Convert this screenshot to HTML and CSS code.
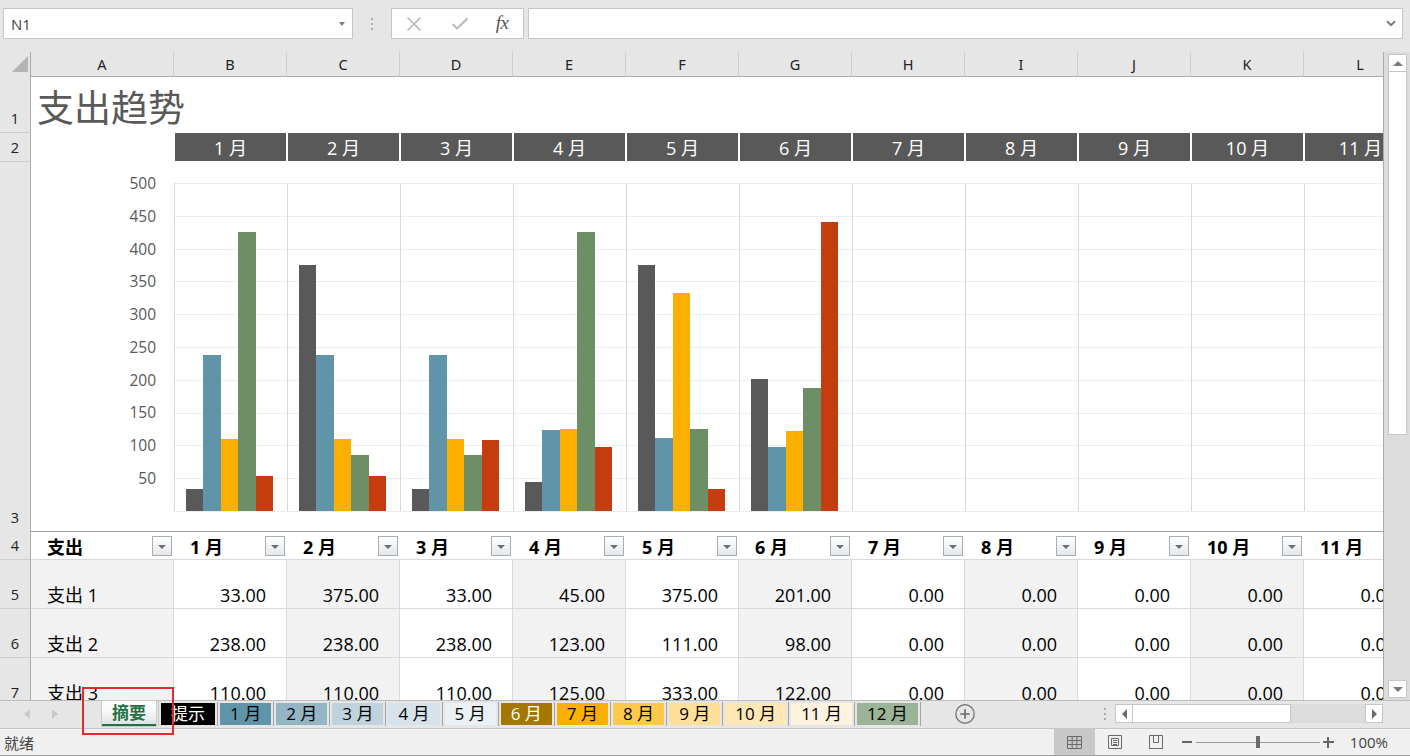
FILE: index.html
```html
<!DOCTYPE html>
<html lang="zh-CN">
<head>
<meta charset="utf-8">
<title>支出趋势</title>
<link rel="stylesheet" href="styles.css">
</head>
<body>
<div class="app">
  <div class="fbar">
    <div class="namebox"><span>N1</span><span class="dd"></span></div>
    <div class="fdots"><i></i><i></i><i></i></div>
    <div class="fbtns">
      <span class="fb fb-x"><svg width="16" height="16" viewBox="0 0 16 16"><path d="M1.5 1.5L14.5 14.5M14.5 1.5L1.5 14.5" stroke="#b5b5b5" stroke-width="1.5" fill="none"/></svg></span>
      <span class="fb fb-ok"><svg width="18" height="14" viewBox="0 0 18 14"><path d="M1.5 7L6 11.5L16.5 1.5" stroke="#b5b5b5" stroke-width="1.8" fill="none"/></svg></span>
      <span class="fb fb-fx">fx</span>
    </div>
    <div class="finput"><svg width="10" height="7" viewBox="0 0 10 7"><path d="M1 1.2L5 5.2L9 1.2" stroke="#7a7a7a" stroke-width="2" fill="none"/></svg></div>
  </div>

  <div class="sheet">
    <div class="grid">
      <div class="hdr">
        <div class="corner"><svg width="31" height="24" viewBox="0 0 31 24"><polygon points="28,4 28,20 12,20" fill="#b4b4b4"/></svg></div>
        <div class="ch">A</div><div class="ch">B</div><div class="ch">C</div><div class="ch">D</div><div class="ch">E</div><div class="ch">F</div><div class="ch">G</div><div class="ch">H</div><div class="ch">I</div><div class="ch">J</div><div class="ch">K</div><div class="ch">L</div>
      </div>

      <div class="row r1">
        <div class="rh">1</div>
        <div class="title">支出趋势</div>
      </div>

      <div class="row r2">
        <div class="rh">2</div>
        <div class="blank"></div>
        <div class="mcell"><div class="mbox">1 月</div></div>
        <div class="mcell"><div class="mbox">2 月</div></div>
        <div class="mcell"><div class="mbox">3 月</div></div>
        <div class="mcell"><div class="mbox">4 月</div></div>
        <div class="mcell"><div class="mbox">5 月</div></div>
        <div class="mcell"><div class="mbox">6 月</div></div>
        <div class="mcell"><div class="mbox">7 月</div></div>
        <div class="mcell"><div class="mbox">8 月</div></div>
        <div class="mcell"><div class="mbox">9 月</div></div>
        <div class="mcell"><div class="mbox">10 月</div></div>
        <div class="mcell"><div class="mbox">11 月</div></div>
      </div>

      <div class="row r3">
        <div class="rh">3</div>
        <div class="axis">
          <div class="ylabels">
            <span>500</span><span>450</span><span>400</span><span>350</span><span>300</span><span>250</span><span>200</span><span>150</span><span>100</span><span>50</span>
          </div>
        </div>
        <div class="plot">
          <div class="parea">
            <div class="pcol"><i class="bar s1" style="height:21.6px"></i><i class="bar s2" style="height:156.1px"></i><i class="bar s3" style="height:72.2px"></i><i class="bar s4" style="height:278.8px"></i><i class="bar s5" style="height:35.4px"></i></div>
            <div class="pcol"><i class="bar s1" style="height:246px"></i><i class="bar s2" style="height:156.1px"></i><i class="bar s3" style="height:72.2px"></i><i class="bar s4" style="height:55.8px"></i><i class="bar s5" style="height:35.4px"></i></div>
            <div class="pcol"><i class="bar s1" style="height:21.6px"></i><i class="bar s2" style="height:156.1px"></i><i class="bar s3" style="height:72.2px"></i><i class="bar s4" style="height:55.8px"></i><i class="bar s5" style="height:70.8px"></i></div>
            <div class="pcol"><i class="bar s1" style="height:29.5px"></i><i class="bar s2" style="height:80.7px"></i><i class="bar s3" style="height:82px"></i><i class="bar s4" style="height:278.8px"></i><i class="bar s5" style="height:64.3px"></i></div>
            <div class="pcol"><i class="bar s1" style="height:246px"></i><i class="bar s2" style="height:72.8px"></i><i class="bar s3" style="height:218.4px"></i><i class="bar s4" style="height:82px"></i><i class="bar s5" style="height:21.6px"></i></div>
            <div class="pcol"><i class="bar s1" style="height:131.9px"></i><i class="bar s2" style="height:64.3px"></i><i class="bar s3" style="height:80px"></i><i class="bar s4" style="height:122.7px"></i><i class="bar s5" style="height:289.3px"></i></div>
            <div class="pcol"></div>
            <div class="pcol"></div>
            <div class="pcol"></div>
            <div class="pcol"></div>
            <div class="pcol"></div>
          </div>
        </div>
      </div>

      <div class="row r4">
        <div class="rh">4</div>
        <div class="th"><span>支出</span><span class="flt"></span></div>
        <div class="th"><span>1 月</span><span class="flt"></span></div>
        <div class="th"><span>2 月</span><span class="flt"></span></div>
        <div class="th"><span>3 月</span><span class="flt"></span></div>
        <div class="th"><span>4 月</span><span class="flt"></span></div>
        <div class="th"><span>5 月</span><span class="flt"></span></div>
        <div class="th"><span>6 月</span><span class="flt"></span></div>
        <div class="th"><span>7 月</span><span class="flt"></span></div>
        <div class="th"><span>8 月</span><span class="flt"></span></div>
        <div class="th"><span>9 月</span><span class="flt"></span></div>
        <div class="th"><span>10 月</span><span class="flt"></span></div>
        <div class="th"><span>11 月</span><span class="flt"></span></div>
      </div>

      <div class="row trow">
        <div class="rh">5</div>
        <div class="c lbl">支出 1</div>
        <div class="c">33.00</div><div class="c">375.00</div><div class="c">33.00</div><div class="c">45.00</div><div class="c">375.00</div><div class="c">201.00</div><div class="c">0.00</div><div class="c">0.00</div><div class="c">0.00</div><div class="c">0.00</div><div class="c">0.00</div>
      </div>
      <div class="row trow">
        <div class="rh">6</div>
        <div class="c lbl">支出 2</div>
        <div class="c">238.00</div><div class="c">238.00</div><div class="c">238.00</div><div class="c">123.00</div><div class="c">111.00</div><div class="c">98.00</div><div class="c">0.00</div><div class="c">0.00</div><div class="c">0.00</div><div class="c">0.00</div><div class="c">0.00</div>
      </div>
      <div class="row trow">
        <div class="rh">7</div>
        <div class="c lbl">支出 3</div>
        <div class="c">110.00</div><div class="c">110.00</div><div class="c">110.00</div><div class="c">125.00</div><div class="c">333.00</div><div class="c">122.00</div><div class="c">0.00</div><div class="c">0.00</div><div class="c">0.00</div><div class="c">0.00</div><div class="c">0.00</div>
      </div>
    </div>

    <div class="vscroll">
      <div class="sbtn"><span class="tri-up"></span></div>
      <div class="vthumb"></div>
      <div class="sbtn down"><span class="tri-down"></span></div>
    </div>
  </div>

  <div class="tabbar">
    <div class="tnav"><span class="tl"></span><span class="tr"></span></div>
    <div class="tabs">
      <div class="tab active"><span>摘要</span></div>
      <div class="tab"><span class="c-tip">提示</span></div>
      <div class="tab"><span class="c-1">1 月</span></div>
      <div class="tab"><span class="c-2">2 月</span></div>
      <div class="tab"><span class="c-3">3 月</span></div>
      <div class="tab"><span class="c-4">4 月</span></div>
      <div class="tab"><span class="c-5">5 月</span></div>
      <div class="tab"><span class="c-6">6 月</span></div>
      <div class="tab"><span class="c-7">7 月</span></div>
      <div class="tab"><span class="c-8">8 月</span></div>
      <div class="tab"><span class="c-9">9 月</span></div>
      <div class="tab"><span class="c-10">10 月</span></div>
      <div class="tab"><span class="c-11">11 月</span></div>
      <div class="tab"><span class="c-12">12 月</span></div>
    </div>
    <div class="tadd"><svg width="22" height="22" viewBox="0 0 22 22"><circle cx="11" cy="11" r="9.2" fill="none" stroke="#7a7a7a" stroke-width="1.4"/><path d="M11 6.2V15.8M6.2 11H15.8" stroke="#6a6a6a" stroke-width="1.6"/></svg></div>
    <div class="hsdots"><i></i><i></i><i></i></div>
    <div class="hscroll">
      <span class="hbtn"><span class="tri-left"></span></span>
      <span class="hthumb"></span>
      <span class="htrack"></span>
      <span class="hbtn"><span class="tri-right"></span></span>
    </div>
    <div class="redbox"></div>
  </div>

  <div class="status">
    <span class="ready">就绪</span>
    <div class="sright">
      <span class="vbtn on"><svg width="15" height="13" viewBox="0 0 15 13"><path d="M0.5 0.5H14.5V12.5H0.5Z M5.17 0.5V12.5 M9.83 0.5V12.5 M0.5 4.5H14.5 M0.5 8.5H14.5" fill="none" stroke="#6a6a6a" stroke-width="1"/></svg></span>
      <span class="vbtn"><svg width="14" height="14" viewBox="0 0 14 14"><path d="M0.5 0.5H13.5V13.5H0.5Z M3.5 3.5H10.5V10.5H3.5Z M5 5.5H9 M5 7.5H9 M5 9.5H9" fill="none" stroke="#6a6a6a" stroke-width="1"/></svg></span>
      <span class="vbtn"><svg width="14" height="14" viewBox="0 0 14 14"><path d="M0.5 0.5H13.5V13.5H0.5Z M4.5 0.5V7.5H9.5V0.5" fill="none" stroke="#6a6a6a" stroke-width="1"/></svg></span>
      <span class="zminus"></span>
      <span class="zslider"><span class="zthumb"></span></span>
      <span class="zplus"></span>
      <span class="zpct">100%</span>
    </div>
  </div>
</div>
</body>
</html>
```

FILE: styles.css
```css
* { box-sizing: border-box; margin: 0; padding: 0; }
html, body { width: 1410px; height: 756px; overflow: hidden; }
body {
  background: #e6e6e6;
  font-family: "Open Sans", "Noto Sans CJK SC", sans-serif;
  color: #000;
}
.app { display: flex; flex-direction: column; height: 756px; width: 1410px; }

/* formula bar */
.fbar { height: 52px; flex: none; display: flex; align-items: flex-start; padding: 8px 7px 0 3px; }
.namebox {
  width: 350px; height: 31px; background: #fff; border: 1px solid #c6c6c6;
  display: flex; align-items: center; justify-content: space-between;
  padding: 0 7px 0 7px; font-size: 15px; color: #444;
}
.namebox .dd { width: 0; height: 0; border-left: 3.5px solid transparent; border-right: 3.5px solid transparent; border-top: 4px solid #7d7d7d; }
.fdots { width: 38px; height: 31px; display: flex; flex-direction: column; align-items: center; justify-content: center; gap: 3px; }
.fdots i, .hsdots i { display: block; width: 2px; height: 2px; background: #ababab; }
.fbtns {
  width: 133px; height: 31px; background: #fff; border: 1px solid #c6c6c6;
  display: flex; align-items: center;
}
.fb { display: flex; align-items: center; justify-content: center; height: 100%; }
.fb-x { width: 44px; }
.fb-ok { width: 48px; }
.fb-fx { width: 36px; font-family: "Liberation Serif", serif; font-style: italic; font-size: 19px; color: #555; letter-spacing: -0.5px; padding-bottom: 2px; }
.finput {
  flex: 1; height: 31px; margin-left: 4px; background: #fff; border: 1px solid #c6c6c6;
  display: flex; align-items: center; justify-content: flex-end; padding-right: 6px;
}

/* sheet */
.sheet { height: 648px; flex: none; display: flex; }
.grid { width: 1383px; height: 648px; overflow: hidden; background: #fff; }
.hdr, .row { display: grid; grid-template-columns: 31px 143px repeat(11, 113px); width: 1417px; }
.hdr { height: 24px; background: #e6e6e6; }
.corner { border-right: 1px solid #ababab; border-bottom: 1px solid #ababab; }
.corner svg { display: block; }
.ch {
  border-right: 1px solid #cdcdcd; border-bottom: 1px solid #ababab;
  display: flex; align-items: center; justify-content: center;
  font-family: "Noto Sans", sans-serif; font-size: 14.5px; color: #222;
}
.rh {
  background: #e6e6e6; border-right: 1px solid #ababab; border-bottom: 1px solid #cdcdcd;
  display: flex; align-items: flex-end; justify-content: center;
  font-size: 14.5px; color: #222; line-height: 20px; padding-bottom: 3px;
}
.r1 { height: 57px; }
.title {
  grid-column: 2 / -1; display: flex; align-items: flex-end;
  font-size: 37px; line-height: 44px; color: #595959; padding: 0 0 3px 6px;
}
.r2 { height: 29px; }
.mcell { padding: 0 1px 1px 1px; }
.mbox {
  height: 100%; background: #595959; color: #fff; font-size: 18px;
  display: flex; align-items: center; justify-content: center;
}
.r3 { height: 369px; }
.axis { padding-top: 13px; }
.ylabels {
  height: 311px; display: flex; flex-direction: column; justify-content: space-between;
  align-items: flex-end; padding-right: 18px;
}
.ylabels span { font-size: 15.5px; line-height: 16px; color: #595959; }
.plot { grid-column: 3 / -1; padding: 21px 0 20px 0; }
.parea {
  height: 329px; display: flex; border-bottom: 1px solid #ececec;
  background: repeating-linear-gradient(to bottom, #eeeeee 0, #eeeeee 1px, transparent 1px, transparent 32.8px);
}
.pcol {
  flex: 0 0 113px; border-left: 1px solid #d9d9d9; padding-left: 11px;
  display: flex; align-items: flex-end;
}
.bar { display: block; width: 17.4px; flex: none; }
.s1 { background: #595959; }
.s2 { background: #6094a8; }
.s3 { background: #fbb000; }
.s4 { background: #6e8e65; }
.s5 { background: #c53c0f; }

.r4 { height: 29px; }
.th {
  border-top: 1px solid #9e9e9e; border-bottom: 1px solid #d9d9d9;
  display: flex; align-items: center; justify-content: space-between;
  padding: 1px 2px 0 16px; font-weight: 700; font-size: 18px;
}
.flt {
  width: 20px; height: 20px; flex: none; position: relative;
  border: 1px solid #a9aeb5; background: linear-gradient(#ffffff, #e4e7ea);
}
.flt::after {
  content: ""; position: absolute; left: 5px; top: 8px;
  border-left: 4px solid transparent; border-right: 4px solid transparent; border-top: 4px solid #6e6e6e;
}
.trow { height: 49px; }
.c {
  border-right: 1px solid #d9d9d9; border-bottom: 1px solid #d9d9d9;
  display: flex; align-items: flex-end; justify-content: flex-end;
  padding: 0 20px 1px 0; font-size: 18px; line-height: 24px; background: #fff;
}
.trow .c:nth-child(even) { background: #f2f2f2; }
.c.lbl { justify-content: flex-start; padding-left: 16px; }

/* vertical scrollbar */
.vscroll {
  width: 27px; flex: none; background: #dcdcdc; border-left: 1px solid #ababab;
  display: flex; flex-direction: column; align-items: center; padding: 2px 0 2px 1px;
}
.sbtn {
  width: 19px; height: 18px; flex: none; background: #fff; border: 1px solid #c6c6c6;
  display: flex; align-items: center; justify-content: center;
}
.sbtn.down { margin-top: auto; }
.vthumb { width: 19px; height: 363px; flex: none; background: #fff; border: 1px solid #c6c6c6; border-top: none; }
.tri-up { border-left: 5px solid transparent; border-right: 5px solid transparent; border-bottom: 5px solid #7a7a7a; }
.tri-down { border-left: 5px solid transparent; border-right: 5px solid transparent; border-top: 5px solid #7a7a7a; }
.tri-left { border-top: 5px solid transparent; border-bottom: 5px solid transparent; border-right: 5px solid #6a6a6a; }
.tri-right { border-top: 5px solid transparent; border-bottom: 5px solid transparent; border-left: 5px solid #6a6a6a; }

/* tabs */
.tabbar {
  height: 28px; flex: none; position: relative; display: flex; align-items: flex-start;
  background: #e6e6e6; border-top: 1px solid #bdbdbd;
}
.tnav { width: 100px; height: 26px; display: flex; align-items: center; padding-left: 24px; gap: 22px; }
.tl { border-top: 5px solid transparent; border-bottom: 5px solid transparent; border-right: 6px solid #c9c9c9; }
.tr { border-top: 5px solid transparent; border-bottom: 5px solid transparent; border-left: 6px solid #c9c9c9; }
.tabs { display: flex; align-items: flex-start; }
.tab { padding: 0 2px; border-right: 1px solid #a3a3a3; height: 24px; margin-top: 1px; }
.tab span {
  display: block; height: 22px; margin-top: 1px; padding: 0 10px;
  font-size: 17px; line-height: 22px; white-space: nowrap;
}
.tab.active { border-right-color: #c6c6c6; margin-top: 0; height: 25px; }
.tab.active span {
  height: 25px; margin-top: 0; color: #217346; font-weight: 700;
  background: linear-gradient(#ffffff 0%, #f4f5f5 55%, #dfe3e4 100%);
  border-bottom: 2px solid #217346; line-height: 23px;
  box-shadow: 0 0 0 1px #c9c9c9;
}
.c-tip { background: #000; color: #fff; }
.c-1 { background: #6094a8; }
.c-2 { background: #93b5c4; }
.c-3 { background: #bed3dc; }
.c-4 { background: #d6e3ea; }
.c-5 { background: #eaf1f4; }
.c-6 { background: #a47700; color: #fff; }
.c-7 { background: #fbb000; }
.c-8 { background: #fdc94c; }
.c-9 { background: #fedf9a; }
.c-10 { background: #ffe7b5; }
.c-11 { background: #fff2de; }
.c-12 { background: #9bb396; }
.tadd { margin-left: 33px; height: 26px; display: flex; align-items: center; }
.tadd svg { display: block; }
.hsdots { margin-left: auto; width: 14px; height: 26px; display: flex; flex-direction: column; align-items: center; justify-content: center; gap: 3px; }
.hscroll { margin: 3px 27px 0 3px; width: 268px; height: 19px; display: flex; background: #dcdcdc; }
.hbtn {
  width: 18px; height: 19px; flex: none; background: #fff; border: 1px solid #c6c6c6;
  display: flex; align-items: center; justify-content: center;
}
.hthumb { width: 158px; height: 19px; flex: none; background: #fff; border: 1px solid #c6c6c6; border-left: none; }
.htrack { flex: 1; }
.redbox {
  position: absolute; left: 82px; top: -14px; width: 92px; height: 48px;
  border: 2px solid #e8262e; z-index: 5; pointer-events: none;
}

/* status bar */
.status {
  height: 28px; flex: none; background: #f0f0f0; border-top: 1px solid #c6c6c6; border-bottom: 1px solid #9e9e9e;
  display: flex; align-items: stretch; justify-content: space-between;
}
.ready { font-size: 15px; color: #444; padding-left: 4px; display: flex; align-items: center; }
.sright { display: flex; align-items: center; padding-right: 22px; }
.vbtn { width: 41px; height: 100%; display: flex; align-items: center; justify-content: center; }
.vbtn.on { background: #c8c8c8; }
.vbtn svg { display: block; }
.zminus { width: 10px; height: 2px; background: #666; margin-left: 5px; }
.zslider { width: 124px; height: 1px; background: #9a9a9a; margin-left: 4px; position: relative; }
.zthumb { position: absolute; left: 60px; top: -6px; width: 4px; height: 12px; background: #6a6a6a; }
.zplus { width: 11px; height: 11px; margin-left: 3px; position: relative; }
.zplus::before { content: ""; position: absolute; left: 0; top: 4.5px; width: 11px; height: 2px; background: #666; }
.zplus::after { content: ""; position: absolute; left: 4.5px; top: 0; width: 2px; height: 11px; background: #666; }
.zpct { margin-left: 16px; font-size: 15px; color: #444; }
```
